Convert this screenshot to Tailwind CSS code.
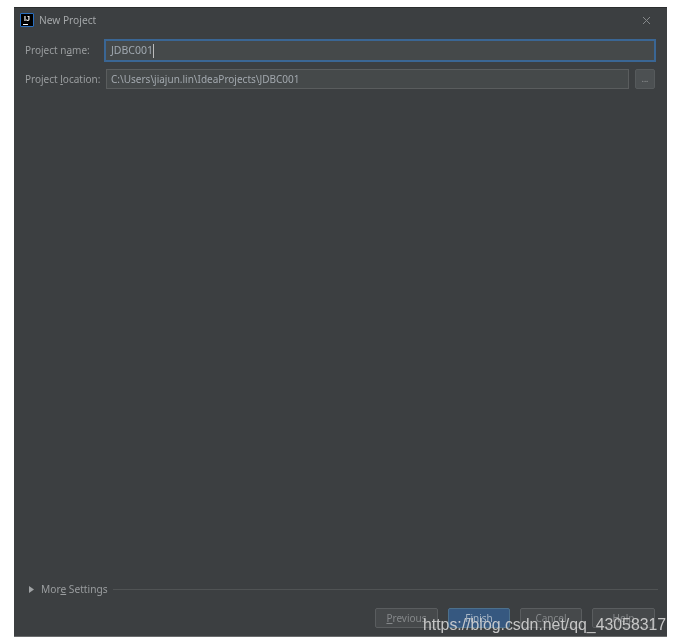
<!DOCTYPE html>
<html lang="en">
<head>
    <meta charset="UTF-8">
    <meta name="viewport" content="width=device-width, initial-scale=1.0">
    <title>New Project</title>
    <script src="https://cdn.jsdelivr.net/npm/@tailwindcss/browser@4"></script>
</head>
<body class="bg-white h-[643px] overflow-hidden pt-[7px] pl-[14px] font-['Noto_Sans',sans-serif] text-[10px] text-[#9a9d9f]">

    <!-- Dialog window -->
    <div class="relative w-[653px] h-[630px] bg-[#3c3f41] border-t border-t-[#2b2d2e] border-b border-b-[#6a6c6d] flex flex-col blur-[0.4px]">

        <!-- Title bar -->
        <div class="h-[24px] pl-[6px] pr-[16px] flex items-center shrink-0">
            <div class="w-[14px] h-[14px] bg-black border border-[#2a6fc0] rounded-[1px] flex flex-col items-center justify-center">
                <span class="font-['Liberation_Sans',sans-serif] font-bold text-[7px] leading-[6px] text-white">IJ</span>
                <span class="w-[5px] h-px bg-white mt-[2px] self-start ml-[2px]"></span>
            </div>
            <span class="ml-[5px] mt-[2px] text-[10.2px] text-[#a4a7a9]">New Project</span>
            <svg class="ml-auto" width="9" height="9" viewBox="0 0 9 9"><path d="M1 1L8 8M8 1L1 8" stroke="#85888a" stroke-width="1" fill="none"/></svg>
        </div>

        <!-- Form rows -->
        <div class="mt-[7px] pl-[11px] pr-[11px] flex flex-col gap-[7px] shrink-0">
            <div class="flex items-center h-[23px]">
                <span class="w-[79px] shrink-0">Project n<span class="underline">a</span>me:</span>
                <div class="flex-1 h-[23px] bg-[#45494a] border-2 border-[#3a6694] pl-[5px] flex items-center text-[#a0a8b0] text-[10.5px]">
                    <span>JDBC001</span><span class="w-px h-[14px] bg-[#bbbbbb]"></span>
                </div>
            </div>
            <div class="flex items-center h-[20px] pr-px">
                <span class="w-[81px] shrink-0">Project <span class="underline">l</span>ocation:</span>
                <div class="flex-1 h-[20px] bg-[#45494a] border border-[#5a5d5e] pl-[4px] flex items-center text-[#a2a8ae]">C:\Users\jiajun.lin\IdeaProjects\JDBC001</div>
                <div class="ml-[6px] w-[20px] h-[20px] rounded-[2px] bg-[#4c5052] border border-[#565a5c] flex items-center justify-center text-[#a0a3a5] leading-[8px] text-[8px]">...</div>
            </div>
        </div>

        <!-- More settings -->
        <div class="mt-auto pl-[15px] pr-[9px] flex items-center h-[14px] shrink-0">
            <svg width="5" height="7" viewBox="0 0 5 7"><path d="M0 0L5 3.5L0 7Z" fill="#a0a3a5"/></svg>
            <span class="ml-[7px] mt-[2px] text-[10.2px]">Mor<span class="underline">e</span> Settings</span>
            <div class="ml-[5px] flex-1 h-px bg-[#505354]"></div>
        </div>

        <!-- Footer buttons -->
        <div class="mt-[12px] mb-[8px] pr-[12px] flex justify-end gap-[10px] shrink-0">
            <div class="w-[63px] h-[20px] rounded-[2px] bg-[#46494b] border border-[#5a5d5f] flex items-center justify-center text-[#85888a]"><span><span class="underline">P</span>revious</span></div>
            <div class="w-[62px] h-[20px] rounded-[2px] bg-[#365880] border border-[#4c708c] flex items-center justify-center text-[#a9b7c6]">Finish</div>
            <div class="w-[62px] h-[20px] rounded-[2px] bg-[#46494b] border border-[#5a5d5f] flex items-center justify-center text-[#85888a]">Cancel</div>
            <div class="w-[63px] h-[20px] rounded-[2px] bg-[#46494b] border border-[#5a5d5f] flex items-center justify-center text-[#85888a]">Help</div>
        </div>
    </div>

    <!-- Watermark -->
    <div class="absolute left-[423px] top-[615px] font-['Liberation_Sans',sans-serif] text-[15.85px] leading-[20px] text-[#d4d4d4]/90 whitespace-nowrap blur-[0.3px]">https://blog.csdn.net/qq_43058317</div>
</body>
</html>
